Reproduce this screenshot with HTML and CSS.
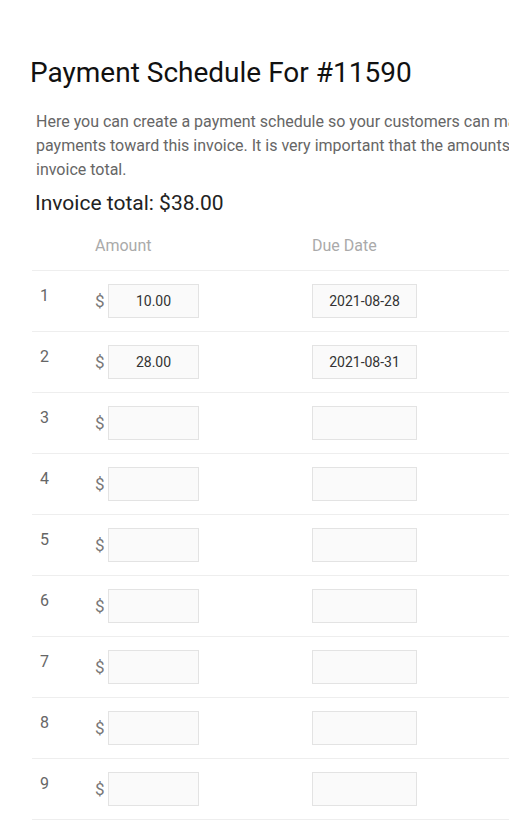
FILE: index.html
```html
<!DOCTYPE html>
<html>
<head>
<meta charset="utf-8">
<link rel="stylesheet" href="styles.css">
</head>
<body>
<div class="page">
  <h1 class="title">Payment Schedule For #11590</h1>
  <p class="intro">Here you can create a payment schedule so your customers can make multiple payments toward this invoice. It is very important that the amounts add up to the invoice total.</p>
  <div class="total">Invoice total: $38.00</div>
  <div class="schedule">
    <div class="row head">
      <div class="num"></div>
      <div class="amount-h">Amount</div>
      <div class="date-h">Due Date</div>
    </div>
    <div class="row">
      <div class="num">1</div>
      <div class="amount"><span class="cur">$</span><input class="field amt" value="10.00"></div>
      <div class="date"><input class="field due" value="2021-08-28"></div>
    </div>
    <div class="row">
      <div class="num">2</div>
      <div class="amount"><span class="cur">$</span><input class="field amt" value="28.00"></div>
      <div class="date"><input class="field due" value="2021-08-31"></div>
    </div>
    <div class="row">
      <div class="num">3</div>
      <div class="amount"><span class="cur">$</span><input class="field amt" value=""></div>
      <div class="date"><input class="field due" value=""></div>
    </div>
    <div class="row">
      <div class="num">4</div>
      <div class="amount"><span class="cur">$</span><input class="field amt" value=""></div>
      <div class="date"><input class="field due" value=""></div>
    </div>
    <div class="row">
      <div class="num">5</div>
      <div class="amount"><span class="cur">$</span><input class="field amt" value=""></div>
      <div class="date"><input class="field due" value=""></div>
    </div>
    <div class="row">
      <div class="num">6</div>
      <div class="amount"><span class="cur">$</span><input class="field amt" value=""></div>
      <div class="date"><input class="field due" value=""></div>
    </div>
    <div class="row">
      <div class="num">7</div>
      <div class="amount"><span class="cur">$</span><input class="field amt" value=""></div>
      <div class="date"><input class="field due" value=""></div>
    </div>
    <div class="row">
      <div class="num">8</div>
      <div class="amount"><span class="cur">$</span><input class="field amt" value=""></div>
      <div class="date"><input class="field due" value=""></div>
    </div>
    <div class="row">
      <div class="num">9</div>
      <div class="amount"><span class="cur">$</span><input class="field amt" value=""></div>
      <div class="date"><input class="field due" value=""></div>
    </div>
  </div>
</div>
</body>
</html>
```

FILE: styles.css
```css
html, body {
  margin: 0;
  padding: 0;
  background: #fff;
  overflow: hidden;
}
body {
  font-family: Roboto, "Liberation Sans", sans-serif;
  color: #222;
}
.page {
  width: 720px;
  padding: 55px 0 0 30px;
}
.title {
  margin: 0;
  font-size: 28px;
  font-weight: 400;
  line-height: 36px;
  color: #111;
}
.intro {
  width: 600px;
  margin: 19px 0 0 6px;
  font-size: 16px;
  line-height: 24px;
  color: #666;
}
.total {
  margin: 7px 0 0 5px;
  font-size: 21px;
  line-height: 28px;
  color: #222;
}
.schedule {
  margin: 11px 0 0 2px;
}
.row {
  display: grid;
  grid-template-columns: 63px 217px 1fr;
  border-bottom: 1px solid #eee;
  height: 60px;
}
.row.head {
  height: 42px;
}
.amount-h, .date-h {
  padding-top: 6px;
  font-size: 16px;
  line-height: 24px;
  color: #aaa;
}
.num {
  padding: 13px 0 0 8px;
  font-size: 16px;
  line-height: 24px;
  color: #666;
}
.amount {
  display: flex;
  align-items: center;
  gap: 4px;
  padding-top: 13px;
  align-self: start;
}
.date {
  padding-top: 13px;
  align-self: start;
}
.cur {
  font-size: 17px;
  color: #777;
  width: 9px;
}
.field {
  box-sizing: border-box;
  height: 34px;
  margin: 0;
  padding: 0;
  border: 1px solid #e3e3e3;
  background: #fafafa;
  font-family: Roboto, "Liberation Sans", sans-serif;
  font-size: 14px;
  color: #333;
  text-align: center;
  outline: none;
}
.amt {
  width: 91px;
}
.due {
  width: 105px;
}
```
